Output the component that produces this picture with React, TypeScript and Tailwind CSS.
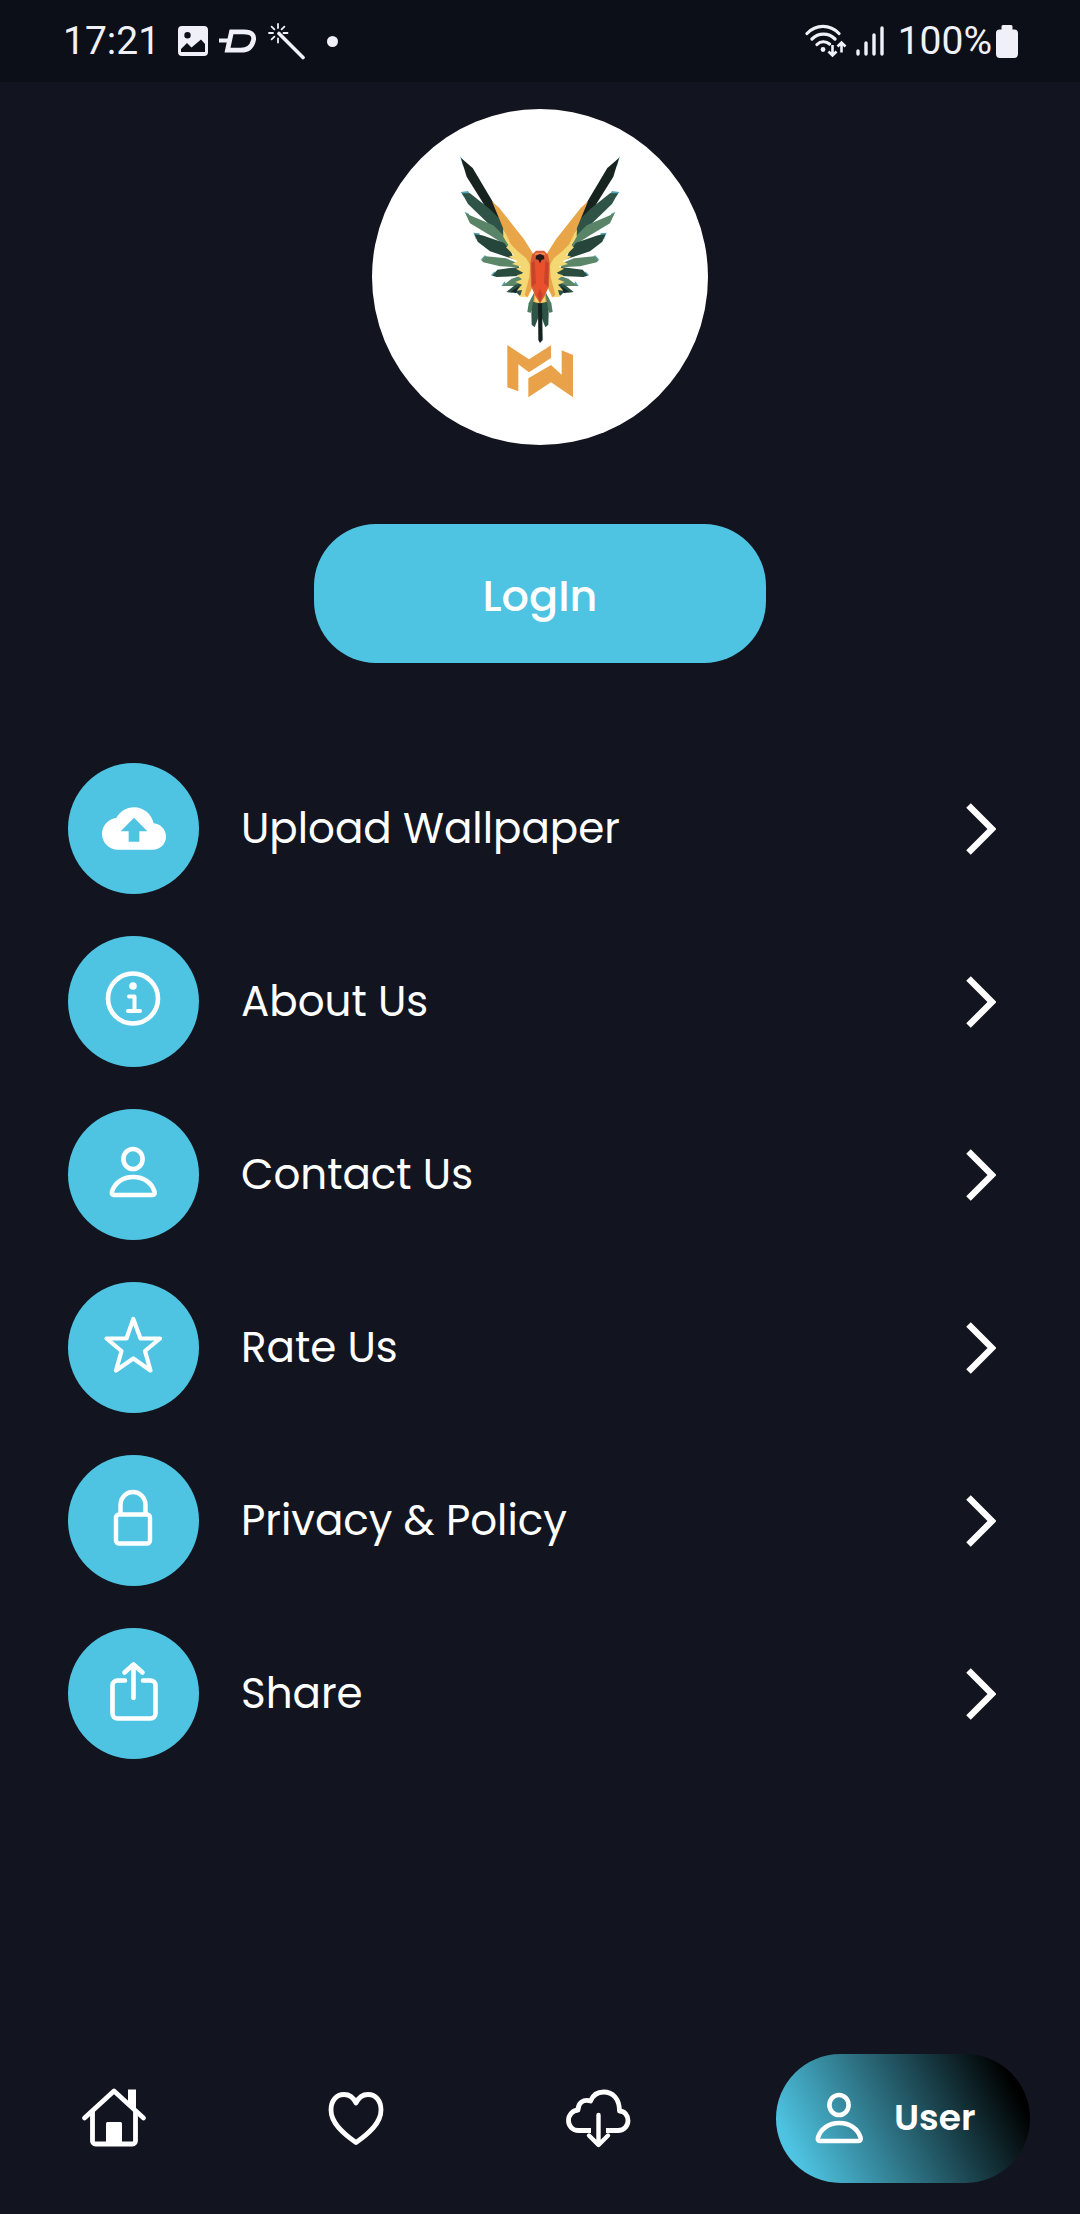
import React from "react";

function ImageIcon() {
  return (
    <svg viewBox="0 0 30 30" className="h-[30px] w-[30px]" aria-hidden="true">
      <path
        fillRule="evenodd"
        fill="currentColor"
        d="M4 0h22a4 4 0 0 1 4 4v22a4 4 0 0 1-4 4H4a4 4 0 0 1-4-4V4a4 4 0 0 1 4-4zM9.500 6a3.200 3.200 0 1 0 0 6.400 3.200 3.200 0 0 0 0-6.400zM3 23v3h24v-8l-4-4.500-9.500 8L9 17z"
      />
    </svg>
  );
}

function DashIcon() {
  return (
    <svg viewBox="0 0 38 24" className="h-[24px] w-[38px]" aria-hidden="true" fill="none" stroke="currentColor">
      <path strokeWidth="4.800" d="M12.500 2.800H25c8 0 10.800 3.700 9.300 9-1.500 6-6 9.400-12.500 9.400H8.500z" />
      <path strokeWidth="4" d="M0 11.500h11" />
    </svg>
  );
}

function WandIcon() {
  return (
    <svg viewBox="0 0 37 37" className="h-[37px] w-[37px]" aria-hidden="true" fill="none" stroke="currentColor" strokeLinecap="round">
      <path strokeWidth="3.600" d="M11 10.500 35 34.500" />
      <path strokeWidth="1.800" d="M10 1v4M10 15.500v4M1 10h4M15.500 10h4M3.600 3.600l2.800 2.800M16.400 3.600l-2.800 2.800M3.600 16.400l2.800-2.800" />
    </svg>
  );
}

function WifiIcon() {
  return (
    <svg viewBox="0 0 42 34" className="h-[34px] w-[42px]" aria-hidden="true" fill="none" stroke="currentColor">
      <path strokeWidth="3.200" strokeLinecap="round" d="M2 9.500c9-9.500 23-9.500 32 0M7 15c6.500-6.500 16.500-6.500 23 0M12 20.500c3.500-3.600 9-3.600 12.500-.5" />
      <circle cx="18" cy="25.500" r="2.400" fill="currentColor" stroke="none" />
      <path strokeWidth="2.600" d="M27.500 21v10M23.500 27.500l4 4 4-4M36.500 28.500v-10M32.500 22.500l4-4 4 4" />
    </svg>
  );
}

function SignalIcon() {
  return (
    <svg viewBox="0 0 28 30" className="h-[30px] w-[28px]" aria-hidden="true" fill="none" stroke="currentColor" strokeWidth="3.400" strokeLinecap="round">
      <path d="M2 25v3M10 17v11M18 9v19M26 2v26" />
    </svg>
  );
}

function BatteryIcon() {
  return (
    <svg viewBox="0 0 22 33" className="h-[33px] w-[22px]" aria-hidden="true" fill="currentColor">
      <path d="M7 0h8a1.500 1.500 0 0 1 1.500 1.500V4.500H18.500A3.500 3.500 0 0 1 22 8v21a4 4 0 0 1-4 4H4a4 4 0 0 1-4-4V8a3.500 3.500 0 0 1 3.500-3.500h2V1.500A1.500 1.500 0 0 1 7 0z" />
    </svg>
  );
}

function StatusBar() {
  return (
    <header className="flex h-[82px] items-center justify-between bg-[#0c0f18] pl-[63px] pr-[62px] font-['Roboto',sans-serif] text-[39px] leading-none text-[#f0f1f8]">
      <div className="flex items-center">
        <span>17:21</span>
        <div className="ml-[18px] flex items-center gap-[11px]">
          <ImageIcon />
          <DashIcon />
          <WandIcon />
        </div>
        <span className="ml-[22px] h-[11px] w-[11px] rounded-full bg-current" />
      </div>
      <div className="flex items-center">
        <WifiIcon />
        <span className="ml-[9px]">
          <SignalIcon />
        </span>
        <span className="ml-[14px]">100%</span>
        <span className="ml-1">
          <BatteryIcon />
        </span>
      </div>
    </header>
  );
}

function Wing() {
  return (
    <g>
      <g fill="#57a5b8">
        <path d="M60 78 74 96 70 112zM62 186l22-3 6 10-18 8zM73 245l14 6 2 18zM100 308l18 2 4 14-14 4zM121 390l14-15 8 10zM152 436l12-12 2 14zM184 468l10-14 6 14z" />
      </g>
      <path fill="#17231f" d="M63 84 98 114 160 218 188 272 190 302 152 256 80 140z" />
      <path fill="#2f5346" d="M66 190 90 190 150 238 176 264 200 318 206 350 150 286 84 222z" />
      <path fill="#598467" d="M76 250 100 260 160 286 196 322 204 350 150 316 90 280z" />
      <path fill="#26463b" d="M104 313 126 316 192 338 212 362 222 388 150 364 113 335z" />
      <path fill="#5b8768" d="M124 391 137 379 198 385 240 402 236 412 180 409 130 397z" />
      <path fill="#294c3f" d="M157 437 172 419 236 411 254 426 236 438 170 441z" />
      <path fill="#5b8768" d="M187 468 215 446 246 436 256 450 226 468z" />
      <path fill="#2e5145" d="M199 486 224 466 262 450 258 478 240 498 230 488 214 488z" />
      <path fill="#13272c" d="M214 484 238 468 228 490z" />
      <path
        fill="#f3d873"
        d="M189 296 214 340 246 364 276 396 280 466 264 502 240 500 246 480 230 482 246 464 226 456 246 448 230 436 252 430 228 416 244 410 216 402 232 394 206 380 222 376 198 352 206 348 190 320z"
      />
      <path fill="#e9a648" d="M156 214 178 234 252 328 280 372 278 470 262 502 254 494 268 440 270 408 246 378 212 342 188 292z" />
      <path fill="#f3d873" d="M216 350 258 384 274 410 262 400 252 410 240 388 232 386z" />
    </g>
  );
}

function TailSide() {
  return (
    <g>
      <path fill="#4d7a60" d="M282 488 290 512 272 548 262 546 266 520z" />
      <path fill="#2d5446" d="M280 512 300 512 296 560 284 592 275 584 274 548z" />
      <path fill="#e9a648" d="M284 482 300 482 300 520 280 516z" />
      <path fill="#f3d873" d="M286 498 298 518 284 516z" />
    </g>
  );
}

function Logo() {
  return (
    <svg viewBox="0 0 600 882" className="h-[294px] w-[200px]" role="img" aria-label="MW parrot logo">
      <Wing />
      <g transform="translate(600 0) scale(-1 1)">
        <Wing />
      </g>
      <TailSide />
      <g transform="translate(600 0) scale(-1 1)">
        <TailSide />
      </g>
      <path fill="#14221f" d="M294 520h12l2 110-8 9-5-9z" />
      <path fill="#d95a35" d="M288 362h24l12 12 5 24-2 70-12 28-15 24-15-24-12-28-2-70 5-24z" />
      <path fill="#e8512b" d="M300 384l20 20 2 60-12 34-10 14-10-14-12-34 2-60z" />
      <path fill="#c9432a" d="M284 390l4 70-12 10-2-70zM316 390l-4 70 12 10 2-70zM300 476l8 18-8 26-8-26z" />
      <path fill="#f08a5a" d="M288 368h24l5 8-17-4-17 4z" />
      <path fill="#251a18" d="M288 377l12-5 12 5 1 11-8 1-5 11-5-11-8-1z" />
      <path fill="#e9a24a" d="M202 645 267 688 333 646V684L267 727 235 703V784L202 772z" />
      <path fill="#e9a24a" d="M265 745 333 705 365 734V661L399 675V802L333 757 265 802z" />
    </svg>
  );
}

function UploadIcon() {
  return (
    <g transform="translate(34 33.500) scale(2.667)" fill="currentColor" stroke="none">
      <path d="M19.350 10.040C18.670 6.590 15.640 4 12 4 9.110 4 6.600 5.640 5.350 8.040 2.340 8.360 0 10.910 0 14c0 3.310 2.690 6 6 6h13c2.760 0 5-2.240 5-5 0-2.640-2.050-4.780-4.650-4.960zM14 13v4h-4v-4H7l5-5 5 5h-3z" />
    </g>
  );
}

function InfoIcon() {
  return (
    <g>
      <circle cx="65" cy="62.500" r="25" strokeWidth="4.600" />
      <circle cx="65" cy="50" r="3.800" fill="currentColor" stroke="none" />
      <path strokeWidth="4" d="M61 60.500h5.500V75M60 75h12" />
    </g>
  );
}

function PersonShape() {
  return (
    <g strokeWidth="4.600">
      <ellipse cx="65" cy="50" rx="9.600" ry="10" />
      <path d="M46 86H84.500C86.500 86 87 84.500 86.500 82.500 84 74 76 68 65.300 68S46.500 74 44 82.500C43.500 84.500 44 86 46 86z" />
    </g>
  );
}

function StarIcon() {
  return <path strokeWidth="4.200" d="M65.300 37 72.500 56.500H92L77 69 82.500 88.500 65.300 76.500 48 88.500 53.500 69 38.500 56.500H58.500z" />;
}

function LockIcon() {
  return (
    <g strokeWidth="4.400">
      <rect x="48" y="59.500" width="34" height="29" rx="3" />
      <path d="M52.500 59V50a12.500 13 0 0 1 25 0v9" />
    </g>
  );
}

function ShareIcon() {
  return (
    <g strokeWidth="4.600">
      <path d="M57 52.500H49.500a5 5 0 0 0-5 5V85.500a5 5 0 0 0 5 5H82.500a5 5 0 0 0 5-5V57.500a5 5 0 0 0-5-5H75" />
      <path d="M65.500 70V37M56.500 44.500l9-8 9 8" />
    </g>
  );
}

const menu = [
  { label: "Upload Wallpaper", icon: <UploadIcon /> },
  { label: "About Us", icon: <InfoIcon /> },
  { label: "Contact Us", icon: <PersonShape /> },
  { label: "Rate Us", icon: <StarIcon /> },
  { label: "Privacy & Policy", icon: <LockIcon /> },
  { label: "Share", icon: <ShareIcon /> },
];

function MenuRow({ label, icon }: { label: string; icon: React.ReactNode }) {
  return (
    <li>
      <button type="button" className="flex w-full items-center text-left">
        <span className="h-[131px] w-[131px] shrink-0 rounded-full bg-[#4ec4e2]">
          <svg viewBox="0 0 131 131" className="h-full w-full" aria-hidden="true" fill="none" stroke="currentColor" strokeLinecap="round" strokeLinejoin="round">
            {icon}
          </svg>
        </span>
        <span className="ml-[42px] grow text-[42px] leading-[60px]">{label}</span>
        <svg viewBox="0 0 30 52" className="h-[52px] w-[30px] shrink-0" aria-hidden="true" fill="none" stroke="currentColor" strokeWidth="6.400">
          <path d="M2.500 2.500 26 26 2.500 49.500" />
        </svg>
      </button>
    </li>
  );
}

function NavButton({ label, children }: { label: string; children: React.ReactNode }) {
  return (
    <button type="button" aria-label={label} className="flex h-[129px] w-[127px] items-center justify-center pb-[3px]">
      <svg viewBox="0 0 66 66" className="h-[66px] w-[66px]" aria-hidden="true" fill="none" stroke="currentColor" strokeWidth="4.800" strokeLinecap="round" strokeLinejoin="round">
        {children}
      </svg>
    </button>
  );
}

function BottomNav() {
  return (
    <nav className="mt-auto flex items-center justify-between px-[50px] pb-[31px]">
      <NavButton label="Home">
        <path d="M3.500 34 33 7l29.500 27" />
        <path d="M11.500 28V57a3 3 0 0 0 3 3H51.500a3 3 0 0 0 3-3V28" />
        <path fill="currentColor" stroke="none" d="M47 5.500h8V26l-8-7zM25 39.500a1.500 1.500 0 0 1 1.500-1.500h13a1.500 1.500 0 0 1 1.500 1.500V60H25z" />
      </NavButton>
      <NavButton label="Favourites">
        <path d="M33 19C30 12.500 26 10.500 21 10.500 13 10.500 8 17 8 26c0 13 12 23.500 25 32.500 13-9 25-19.500 25-32.500 0-9-5-15.500-13-15.500-5 0-9 2-12 8.500z" />
      </NavButton>
      <NavButton label="Downloads">
        <path strokeLinecap="butt" d="M26 46.500H13.500C7.500 46.500 3.500 42 3.500 36.500S7.500 26.500 13 26C13 19 18 15 25.500 17 28 11 33 8 38.500 8 48 8 54.500 15 54.500 27 59.500 27 63 31.500 63 36.500S59.500 46.500 53 46.500H41" />
        <path strokeWidth="4.400" d="M33.500 31V60M24 51.500l9.500 9.500 9.500-9.500" />
      </NavButton>
      <button
        type="button"
        aria-current="page"
        className="flex h-[129px] w-[254px] items-center rounded-full bg-[linear-gradient(63deg,#4ec4e2_10%,#000000_90%)] pb-[2px] pl-[36px]"
      >
        <svg viewBox="40 36 50 54" className="h-[54px] w-[54px]" aria-hidden="true" fill="none" stroke="currentColor" strokeLinejoin="round">
          <PersonShape />
        </svg>
        <span className="ml-7 text-[36px] font-semibold leading-[48px]">User</span>
      </button>
    </nav>
  );
}

export default function App() {
  return (
    <div className="flex min-h-screen flex-col bg-[#12151f] font-['Poppins','Inter',sans-serif] text-white">
      <StatusBar />
      <main className="flex flex-col items-center pt-[27px]">
        <div className="flex h-[336px] w-[336px] items-center justify-center rounded-full bg-white">
          <Logo />
        </div>
        <button type="button" className="mt-[79px] h-[139px] w-[452px] rounded-[62px] bg-[#4ec4e2] pt-[5px] text-[43px] font-medium leading-[60px]">
          LogIn
        </button>
        <ul className="mt-[100px] flex w-full flex-col gap-[42px] pl-[68px] pr-[84px]">
          {menu.map((item) => (
            <MenuRow key={item.label} label={item.label} icon={item.icon} />
          ))}
        </ul>
      </main>
      <BottomNav />
    </div>
  );
}
